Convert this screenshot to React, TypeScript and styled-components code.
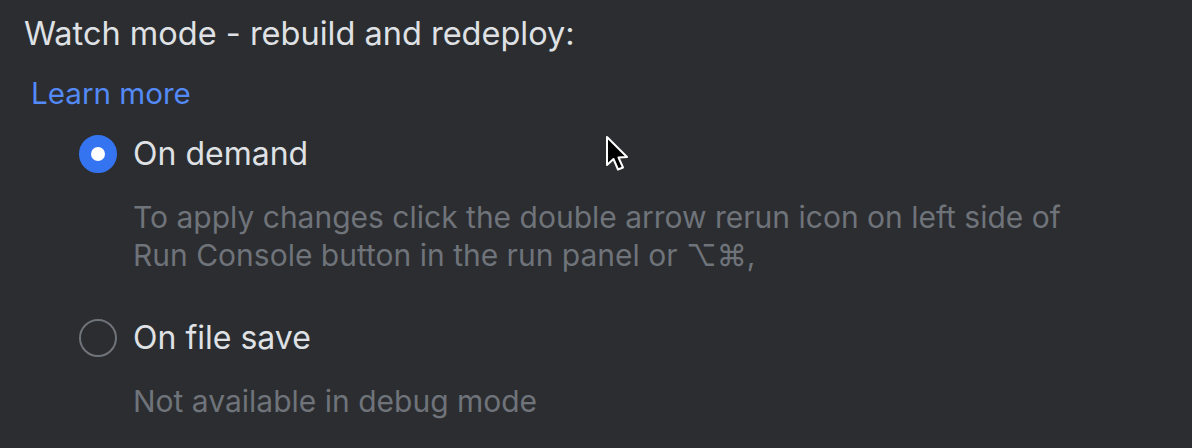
import React from "react";
import styled, { createGlobalStyle } from "styled-components";

const GlobalStyle = createGlobalStyle`
  html, body {
    margin: 0;
    padding: 0;
    background: #2b2d30;
  }
`;

const Page = styled.div`
  position: relative;
  width: 1192px;
  height: 448px;
  box-sizing: border-box;
  padding: 14px 0 0 24px;
  background: #2b2d30;
  font-family: Inter, "Noto Sans", sans-serif;
  color: #dfe1e5;
  overflow: hidden;
`;

const Title = styled.div`
  font-size: 32.5px;
  line-height: 40px;
`;

const Link = styled.a`
  display: inline-block;
  margin: 18.5px 0 0 7px;
  font-size: 29.6px;
  line-height: 40px;
  color: #548af7;
  text-decoration: none;
`;

const Options = styled.div`
  display: flex;
  flex-direction: column;
  padding-left: 55px;
`;

const Option = styled.div<{ $gap: number }>`
  display: flex;
  flex-direction: column;
  margin-top: ${(p) => p.$gap}px;
`;

const OptionRow = styled.label`
  display: flex;
  align-items: center;
  gap: 16px;
  font-size: 32px;
  line-height: 40px;
  cursor: pointer;
`;

const Radio = styled.span<{ $checked: boolean }>`
  width: 38px;
  height: 38px;
  box-sizing: border-box;
  border-radius: 50%;
  display: flex;
  align-items: center;
  justify-content: center;
  background: ${(p) => (p.$checked ? "#3574f0" : "transparent")};
  border: 2px solid ${(p) => (p.$checked ? "#3574f0" : "#6f737a")};

  &::after {
    content: "";
    display: ${(p) => (p.$checked ? "block" : "none")};
    width: 14px;
    height: 14px;
    border-radius: 50%;
    background: #ffffff;
  }
`;

const Hint = styled.div`
  margin-top: 24px;
  padding-left: 54px;
  font-size: 30px;
  line-height: 38px;
  color: #6f737a;
`;

const Cursor = styled.svg`
  position: absolute;
  left: 605px;
  top: 135px;
`;

export default function App() {
  return (
    <Page>
      <GlobalStyle />
      <Title>Watch mode - rebuild and redeploy:</Title>
      <Link href="#">Learn more</Link>
      <Options>
        <Option $gap={21.5}>
          <OptionRow>
            <Radio $checked={true} />
            On demand
          </OptionRow>
          <Hint>
            To apply changes click the double arrow rerun icon on left side of
            <br />
            Run Console button in the run panel or ⌥⌘,
          </Hint>
        </Option>
        <Option $gap={44}>
          <OptionRow>
            <Radio $checked={false} />
            On file save
          </OptionRow>
          <Hint>Not available in debug mode</Hint>
        </Option>
      </Options>
      <Cursor width="28" height="40" viewBox="0 0 28 40">
        <path
          d="M2 2 L2 30 L8.5 24 L13 34.5 L18 32.5 L13.5 22.5 L22 22 Z"
          fill="#000"
          stroke="#fff"
          strokeWidth="2"
          strokeLinejoin="round"
        />
      </Cursor>
    </Page>
  );
}
